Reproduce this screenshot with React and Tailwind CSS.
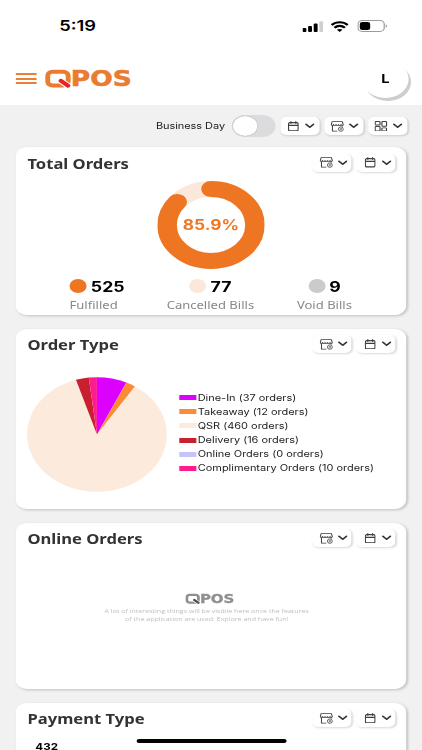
const PIE = [
  { label: "Dine-In", count: 37, color: "#dc00ff" },
  { label: "Takeaway", count: 12, color: "#fb8b34" },
  { label: "QSR", count: 460, color: "#fceadd" },
  { label: "Delivery", count: 16, color: "#c8202e" },
  { label: "Online Orders", count: 0, color: "#c4c4fb" },
  { label: "Complimentary Orders", count: 10, color: "#ff1c8e" },
];

const STATS = [
  { value: 525, label: "Fulfilled", dot: "bg-[#ee7623]", width: "w-[61px]", align: "items-start" },
  { value: 77, label: "Cancelled Bills", dot: "bg-[#fce8db]", width: "w-[80px]", align: "items-center" },
  { value: 9, label: "Void Bills", dot: "bg-[#cbcbcb]", width: "w-[78px]", align: "items-center" },
];

function Logo({ className, color, accent }) {
  return (
    <svg viewBox="0 0 76 28" className={className} role="img" aria-label="QPOS">
      <rect x="2.1" y="6.8" width="16.8" height="13.6" rx="4" fill="none" stroke={color} strokeWidth="4" />
      <path d="M12 15.1 19.6 21.5" stroke="#fff" strokeWidth="5.8" />
      <path d="M12.9 15.7 18.8 20.7" stroke={accent} strokeWidth="3.8" strokeLinecap="round" />
      <text
        x="21"
        y="21.3"
        textLength="50"
        lengthAdjust="spacingAndGlyphs"
        fontFamily="DejaVu Sans, sans-serif"
        fontWeight="700"
        fontSize="21.5"
        stroke={color}
        strokeWidth="0.5"
        fill={color}
      >
        POS
      </text>
    </svg>
  );
}

function CalendarIcon() {
  return (
    <svg viewBox="0 0 10 10" className="h-[10.5px] w-[9px]" fill="none" stroke="#3f3f3f" strokeWidth="1.1" preserveAspectRatio="none">
      <rect x="0.6" y="1.6" width="8.8" height="7.8" rx="1.2" />
      <path d="M0.6 4.2h8.8M2.8 0.3v2.4M7.2 0.3v2.4" />
    </svg>
  );
}

function StoreIcon() {
  return (
    <svg viewBox="0 0 12 11" className="h-[11px] w-[11px]" fill="none" stroke="#3f3f3f" strokeWidth="0.9" preserveAspectRatio="none">
      <path d="M1.4 0.6h9.2l0.8 3.1c-.5.9-1.5.9-2 0-.6.9-1.7.9-2.3 0-.6.9-1.6.9-2.2 0-.6.9-1.7.9-2.3 0-.5.9-1.5.9-2 0z" />
      <path d="M1.7 4.6v5.5h4.4M10.5 4.4v1" />
      <circle cx="9.2" cy="8.1" r="2.2" strokeWidth="0.75" />
      <circle cx="9.2" cy="8.1" r="0.8" strokeWidth="0.6" />
    </svg>
  );
}

function GridIcon() {
  return (
    <svg viewBox="0 0 11 11" className="h-[10.5px] w-[10.5px]" fill="none" stroke="#3f3f3f" strokeWidth="1">
      <rect x="0.6" y="0.6" width="4.2" height="3.6" rx="0.8" />
      <rect x="6.4" y="0.6" width="4" height="5" rx="0.8" />
      <rect x="0.6" y="5.8" width="4.2" height="4.6" rx="0.8" />
      <rect x="6.4" y="7.2" width="4" height="3.2" rx="0.8" />
    </svg>
  );
}

function DropButton({ children }) {
  return (
    <button className="flex h-[18px] w-8 items-center rounded-[5px] bg-white pl-[5.4px] shadow-[1px_1px_2px_rgba(0,0,0,0.15)]">
      <span className="flex w-[11px] justify-center">{children}</span>
      <svg viewBox="0 0 8 6" className="ml-[4px] h-[6px] w-[8px]" fill="none" stroke="#333" strokeWidth="1.5">
        <path d="M0.9 1.2 4 4.3 7.1 1.2" strokeLinecap="round" strokeLinejoin="round" />
      </svg>
    </button>
  );
}

function Card({ title, className, children }) {
  return (
    <section className={`flex shrink-0 flex-col rounded-[9px] bg-white shadow-[1px_1px_2.5px_rgba(0,0,0,0.2)] ${className}`}>
      <div className="flex h-8 items-center justify-between pr-[8.7px] pl-[9.5px]">
        <h2 className="pt-[1.5px] text-[13.6px] font-bold text-[#333]">{title}</h2>
        <div className="-mt-px flex gap-1">
          <DropButton><StoreIcon /></DropButton>
          <DropButton><CalendarIcon /></DropButton>
        </div>
      </div>
      {children}
    </section>
  );
}

function StatusBar() {
  return (
    <div className="flex h-[52px] items-center justify-between pr-[28.5px] pl-[48.5px]">
      <span className="font-['Inter'] text-[15px] font-semibold text-black">5:19</span>
      <div className="flex items-center gap-[6.5px]">
        <svg viewBox="0 0 17 11" className="h-[11px] w-[17px]">
          <rect x="0" y="7" width="3.2" height="4" rx="0.9" />
          <rect x="4.6" y="5" width="3.2" height="6" rx="0.9" />
          <rect x="9.2" y="2.6" width="3.2" height="8.4" rx="0.9" />
          <rect x="13.8" y="0.2" width="3.2" height="10.8" rx="0.9" fill="#cfcfcf" />
        </svg>
        <svg viewBox="0 0 15 11" className="h-[11px] w-[15px]" fill="none" stroke="#000" strokeWidth="2.1">
          <path d="M0.9 4C4.6.3 10.4.3 14.1 4" />
          <path d="M3.2 6.7c2.5-2.4 6.1-2.4 8.6 0" />
          <path d="M7.5 11 5.2 8.8c1.3-1.1 3.3-1.1 4.6 0z" fill="#000" stroke="none" />
        </svg>
        <svg viewBox="0 0 25 12" className="h-[12px] w-[25px]">
          <rect x="0.5" y="0.5" width="21.5" height="11" rx="3.4" fill="none" stroke="#9b9b9b" />
          <rect x="2" y="2" width="8.5" height="8" rx="2" />
          <path d="M23.2 4.2c1.5.5 1.5 3.1 0 3.6z" fill="#9b9b9b" />
        </svg>
      </div>
    </div>
  );
}

function Donut({ percent }) {
  const length = 2 * Math.PI * 36;
  return (
    <svg viewBox="0 0 88 88" className="h-[88px] w-[88px]">
      <circle cx="44" cy="44" r="36" fill="none" stroke="#fce8db" strokeWidth="16" />
      <circle
        cx="44"
        cy="44"
        r="36"
        fill="none"
        stroke="#ee7623"
        strokeWidth="16"
        strokeLinecap="round"
        strokeDasharray={`${(length * percent) / 100} ${length}`}
        transform="rotate(-90 44 44)"
      />
      <text x="44" y="49.3" textAnchor="middle" fontFamily="Inter, sans-serif" fontSize="14.2" fontWeight="700" fill="#ee7623">
        {percent}%
      </text>
    </svg>
  );
}

function PieChart() {
  const total = PIE.reduce((s, p) => s + p.count, 0);
  const r = 57.3;
  let start = 0;
  const slices = PIE.filter((p) => p.count > 0).map((p) => {
    const end = start + (p.count / total) * 2 * Math.PI;
    const large = end - start > Math.PI ? 1 : 0;
    const d = `M0 0L${r * Math.sin(start)} ${-r * Math.cos(start)}A${r} ${r} 0 ${large} 1 ${r * Math.sin(end)} ${-r * Math.cos(end)}Z`;
    start = end;
    return <path key={p.label} d={d} fill={p.color} />;
  });
  return (
    <svg viewBox="-57.5 -57.5 115 115" className="h-[115px] w-[115px] shrink-0">
      {slices}
    </svg>
  );
}

export default function App() {
  return (
    <div className="h-[750px] w-[422px] overflow-hidden bg-[#f1f1f1]">
      {/* 346pt wide phone canvas stretched to the full width */}
      <div className="relative flex h-[750px] w-[346px] origin-top-left scale-x-[1.2197] flex-col overflow-hidden font-['Noto_Sans','Open_Sans',sans-serif]">
        <header className="h-[105px] shrink-0 bg-white">
          <StatusBar />
          <div className="flex h-[53px] items-center justify-between pr-[11px] pl-[13px]">
            <div className="flex items-center">
              <div className="flex w-[16.5px] flex-col gap-[2.5px]">
                <span className="h-[2px] bg-[#e98037]" />
                <span className="h-[2px] bg-[#e98037]" />
                <span className="h-[2px] bg-[#e98037]" />
              </div>
              <Logo className="ml-[7.5px] h-[28px] w-[76px]" color="#ea7b2f" accent="#e8242b" />
            </div>
            <div className="flex size-[38px] items-center justify-center rounded-full bg-white font-['Inter'] text-[12px] font-bold text-black shadow-[2px_3px_0.5px_#cdcdcd]">
              L
            </div>
          </div>
        </header>

        <div className="flex h-[42px] shrink-0 items-center justify-end gap-1 pr-[12.5px]">
          <span className="mr-[1.5px] font-['Inter'] text-[9px] tracking-[-0.05px] text-[#222]">Business Day</span>
          <div className="flex h-[21.5px] w-[35.5px] items-center rounded-full bg-[#dcdcde] px-[0.5px]">
            <span className="size-[20px] rounded-full bg-white shadow-[0_0_1px_rgba(0,0,0,0.4)]" />
          </div>
          <DropButton><CalendarIcon /></DropButton>
          <DropButton><StoreIcon /></DropButton>
          <DropButton><GridIcon /></DropButton>
        </div>

        <main className="flex flex-col gap-[13.5px] px-[13px]">
          <Card title="Total Orders" className="h-[168px]">
            <div className="flex flex-col items-center pt-[2.3px]">
              <Donut percent={85.9} />
              <div className="mt-[7.7px] flex w-full justify-between pr-[28px] pl-[44px]">
                {STATS.map((s) => (
                  <div key={s.label} className={`flex flex-col ${s.width} ${s.align}`}>
                    <div className="flex h-[19px] items-center gap-[3.5px]">
                      <span className={`size-[14px] rounded-full ${s.dot}`} />
                      <span className="font-['Inter'] text-[14.5px] font-bold text-black">{s.value}</span>
                    </div>
                    <span className="text-[10.7px] leading-[18px] whitespace-nowrap text-[#888]">{s.label}</span>
                  </div>
                ))}
              </div>
            </div>
          </Card>

          <Card title="Order Type" className="h-[180.5px]">
            <div className="flex items-center pt-[16px] pl-[9px]">
              <PieChart />
              <ul className="-mt-[2px] ml-[10px] flex flex-col">
                {PIE.map((p) => (
                  <li key={p.label} className="flex h-[14.1px] items-center gap-[1.6px]">
                    <span className="h-[5px] w-[13.5px]" style={{ backgroundColor: p.color }} />
                    <span className="font-['Inter'] text-[9px] tracking-[-0.01px] whitespace-nowrap text-[#222]">
                      {p.label} ({p.count} orders)
                    </span>
                  </li>
                ))}
              </ul>
            </div>
          </Card>

          <Card title="Online Orders" className="h-[166.5px]">
            <div className="flex flex-col items-center pt-[36.5px]">
              <Logo className="ml-[1px] h-[16px] w-[43px]" color="#8f8f8f" accent="#4a4a4a" />
              <p className="-ml-[7px] pt-px text-center font-['Open_Sans'] text-[5.8px] leading-[7.6px] text-[#bdbdbd]">
                A lot of interesting things will be visible here once the features
                <br />
                of the application are used. Explore and have fun!
              </p>
            </div>
          </Card>

          <Card title="Payment Type" className="h-[168px]">
            <span className="pl-[16px] font-['Inter'] text-[9.5px] leading-[23px] font-bold text-black">432</span>
          </Card>
        </main>

        <div className="absolute bottom-[7.5px] left-[111.5px] h-[4px] w-[123px] rounded-full bg-black" />
      </div>
    </div>
  );
}
